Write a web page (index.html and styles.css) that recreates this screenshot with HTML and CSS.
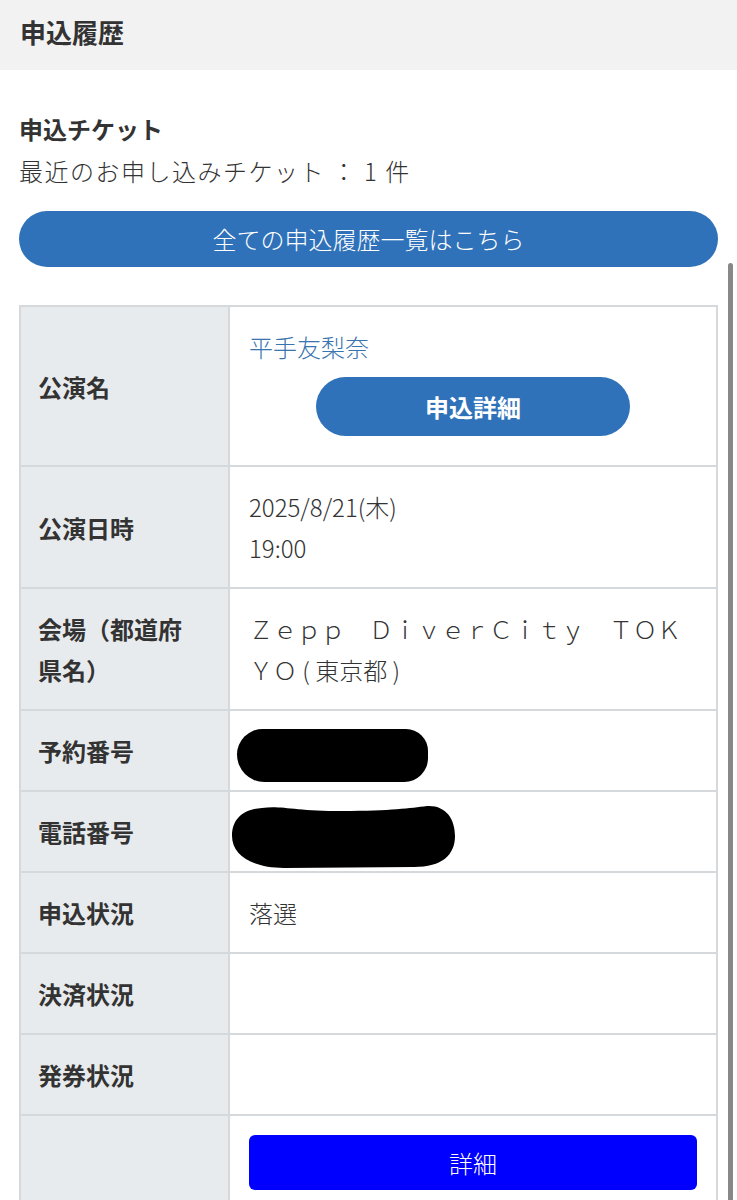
FILE: index.html
```html
<!DOCTYPE html>
<html lang="ja">
<head>
    <meta charset="UTF-8">
    <meta name="viewport" content="width=device-width, initial-scale=1.0">
    <title>申込履歴</title>
    <link rel="stylesheet" href="styles.css">
</head>
<body>
    <div class="page-head">
        <h1>申込履歴</h1>
    </div>

    <div class="container">
        <div class="ticket-summary">
            <h2>申込チケット</h2>
            <p>最近のお申し込みチケット ： 1 件</p>
        </div>

        <a class="btn-history" href="#">全ての申込履歴一覧はこちら</a>

        <table class="ticket-table">
            <colgroup>
                <col class="col-label">
                <col>
            </colgroup>
            <tr>
                <th>公演名</th>
                <td>
                    <a class="event-name" href="#">平手友梨奈</a>
                    <a class="btn-detail" href="#">申込詳細</a>
                </td>
            </tr>
            <tr>
                <th>公演日時</th>
                <td>2025/8/21(木)<br>19:00</td>
            </tr>
            <tr>
                <th>会場（都道府県名）</th>
                <td>Ｚｅｐｐ　ＤｉｖｅｒＣｉｔｙ　ＴＯＫＹＯ ( 東京都 )</td>
            </tr>
            <tr>
                <th>予約番号</th>
                <td><div class="redact redact-1"></div></td>
            </tr>
            <tr>
                <th>電話番号</th>
                <td>
                    <svg class="redact-2" width="223" height="63" viewBox="0 0 223 63">
                        <path d="M30 3 C48 0 62 6 110 6 C160 6 178 3 195 1 C214 0 223 14 223 31 C223 50 210 62 182 62 L52 63 C20 63 0 50 0 31 C0 13 12 4 30 3 Z" fill="#000"/>
                    </svg>
                </td>
            </tr>
            <tr>
                <th>申込状況</th>
                <td>落選</td>
            </tr>
            <tr>
                <th>決済状況</th>
                <td></td>
            </tr>
            <tr>
                <th>発券状況</th>
                <td></td>
            </tr>
            <tr>
                <th></th>
                <td><a class="btn-more" href="#">詳細</a></td>
            </tr>
        </table>
    </div>

    <div class="scroll-indicator"></div>
</body>
</html>
```

FILE: styles.css
```css
body {
    margin: 0;
    font-family: "Noto Sans CJK JP", "Noto Sans", sans-serif;
    color: #333;
    background-color: white;
}
.page-head {
    background-color: #f2f2f2;
    height: 70px;
    padding: 0 20px 8px;
    box-sizing: border-box;
    display: flex;
    align-items: center;
}
.page-head h1 {
    margin: 0;
    font-size: 26px;
    font-weight: bold;
    color: #333;
}
.container {
    padding: 38px 19px 0;
}
.ticket-summary h2 {
    margin: 0;
    font-size: 24px;
    line-height: 42px;
    font-weight: bold;
}
.ticket-summary p {
    margin: 0;
    font-size: 24px;
    line-height: 42px;
    letter-spacing: 1.5px;
    font-weight: 300;
}
.btn-history {
    display: block;
    margin-top: 19px;
    height: 56px;
    line-height: 56px;
    border-radius: 28px;
    background-color: #3072b9;
    color: white;
    text-align: center;
    font-size: 24px;
    font-weight: 300;
    text-decoration: none;
}
.ticket-table {
    margin-top: 38px;
    width: 100%;
    border-collapse: collapse;
    table-layout: fixed;
    border: 2px solid #d6d9db;
}
.col-label {
    width: 209px;
}
.ticket-table th,
.ticket-table td {
    border: 2px solid #d6d9db;
    font-size: 24px;
    line-height: 41px;
}
.ticket-table th {
    background-color: #e8ebed;
    text-align: left;
    font-weight: bold;
    padding: 19px 26px 19px 17px;
    vertical-align: middle;
}
.ticket-table td {
    background-color: white;
    padding: 19px;
    font-weight: 300;
    vertical-align: top;
}
.event-name {
    display: block;
    color: #3874ad;
    text-decoration: none;
}
.btn-detail {
    display: block;
    width: 314px;
    height: 59px;
    line-height: 59px;
    margin: 10px auto;
    border-radius: 30px;
    background-color: #3072b9;
    color: white;
    text-align: center;
    font-weight: bold;
    text-decoration: none;
}
.redact {
    background-color: #000;
}
.redact-1 {
    width: 191px;
    height: 53px;
    margin: -1px 0 -11px -12px;
    border-radius: 28px 24px 26px 30px;
}
.redact-2 {
    display: block;
    margin: -6px 0 -16px -17px;
}
.btn-more {
    display: block;
    height: 55px;
    line-height: 55px;
    border-radius: 6px;
    background-color: #0000ff;
    color: white;
    text-align: center;
    text-decoration: none;
}
.scroll-indicator {
    position: fixed;
    top: 263px;
    right: 4px;
    width: 5px;
    height: 1000px;
    border-radius: 3px;
    background-color: #888;
}
```
